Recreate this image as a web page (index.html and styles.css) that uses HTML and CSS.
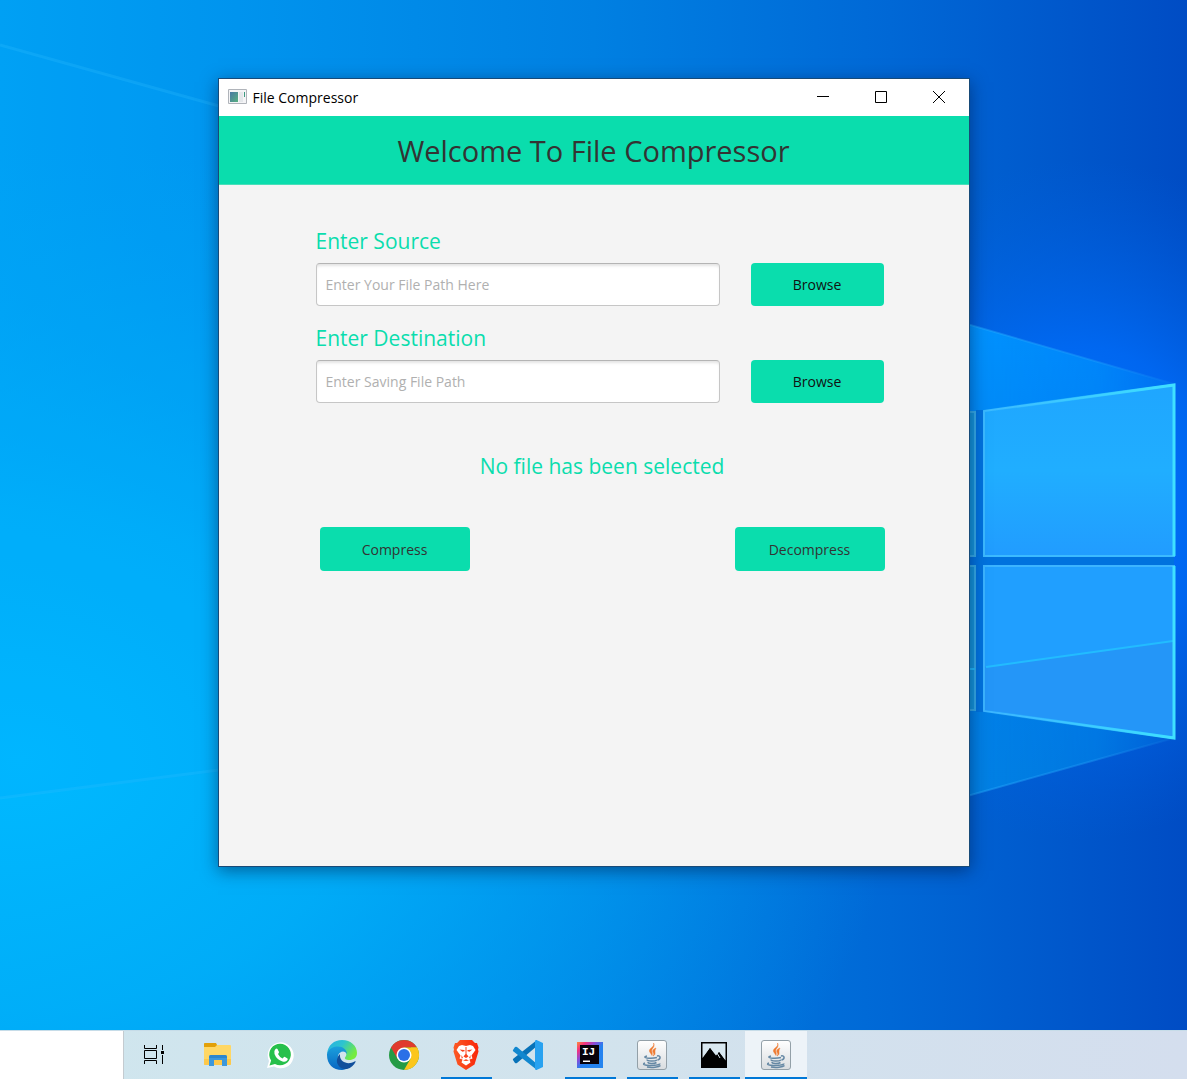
FILE: index.html
```html
<!DOCTYPE html>
<html lang="en">
<head>
<meta charset="utf-8">
<title>File Compressor</title>
<link rel="stylesheet" href="styles.css">
</head>
<body>
<div class="screen">
  <main class="desktop">
    <svg class="wallpaper" viewBox="0 0 1187 1030" preserveAspectRatio="none" aria-hidden="true">
      <defs>
        <linearGradient id="sky" x1="0" y1="0" x2="1" y2="0">
          <stop offset="0" stop-color="#00a0f4"/>
          <stop offset=".2" stop-color="#0094ee"/>
          <stop offset=".5" stop-color="#0080e2"/>
          <stop offset=".75" stop-color="#0068d6"/>
          <stop offset="1" stop-color="#004cc4"/>
        </linearGradient>
        <radialGradient id="cyan" gradientUnits="userSpaceOnUse" cx="0" cy="0" r="1" gradientTransform="translate(20 760) scale(880 620)">
          <stop offset="0" stop-color="#00b9ff"/>
          <stop offset=".4" stop-color="#00b2fa" stop-opacity=".8"/>
          <stop offset="1" stop-color="#00a4f4" stop-opacity="0"/>
        </radialGradient>
        <radialGradient id="glow" gradientUnits="userSpaceOnUse" cx="0" cy="0" r="1" gradientTransform="translate(1080 500) scale(300 340)">
          <stop offset="0" stop-color="#0078ff"/>
          <stop offset=".45" stop-color="#006cfa" stop-opacity=".8"/>
          <stop offset="1" stop-color="#0060e0" stop-opacity="0"/>
        </radialGradient>
        <linearGradient id="beam" x1="0" y1="0" x2="0" y2="1">
          <stop offset="0" stop-color="#0094ff"/>
          <stop offset=".5" stop-color="#0080ec"/>
          <stop offset="1" stop-color="#0082e4"/>
        </linearGradient>
        <linearGradient id="beamfade" x1="0" y1="0" x2="1" y2="0">
          <stop offset="0" stop-color="#fff"/>
          <stop offset=".6" stop-color="#bbb"/>
          <stop offset="1" stop-color="#222"/>
        </linearGradient>
        <mask id="fade"><rect x="960" y="300" width="227" height="500" fill="url(#beamfade)"/></mask>
        <linearGradient id="pane" x1="0" y1="0" x2="0" y2="1">
          <stop offset="0" stop-color="#1fa6ff"/>
          <stop offset=".5" stop-color="#20aeff"/>
          <stop offset="1" stop-color="#219cff"/>
        </linearGradient>
        <linearGradient id="edge" gradientUnits="userSpaceOnUse" x1="984" y1="0" x2="1174" y2="0">
          <stop offset="0" stop-color="#3fdcff" stop-opacity="0"/>
          <stop offset="1" stop-color="#3fe0ff"/>
        </linearGradient>
      </defs>
      <rect width="1187" height="1030" fill="url(#sky)"/>
      <rect width="1187" height="1030" fill="url(#cyan)"/>
      <rect width="1187" height="1030" fill="url(#glow)"/>
      <path d="M0 45 219 106V772L0 798Z" fill="#00a8ff" fill-opacity=".15"/>
      <path d="M0 45 219 106M0 798 219 770" stroke="#30c0ff" stroke-opacity=".25" stroke-width="3" fill="none"/>
      <g mask="url(#fade)">
        <path d="M960 322 1174 384V738L960 798Z" fill="url(#beam)"/>
        <path d="M960 322 1174 384M960 798 1174 738" stroke="#28b0ff" stroke-opacity=".45" stroke-width="2"/>
      </g>
      <path d="M960 557H1174V565H960ZM976 410H984V712H976Z" fill="#0072de"/>
      <path d="M960 412H975V556H960ZM960 566H975V710H960Z" fill="#1496dc" stroke="#35abe8" stroke-width="2"/>
      <path d="M984 411 1174 385V556H984Z" fill="url(#pane)" stroke="#3cbaff" stroke-width="2"/>
      <path d="M984 566H1174V738L984 711Z" fill="#209fff" stroke="#3cb4ff" stroke-width="2"/>
      <path d="M985 667 1173 641V736L985 710Z" fill="#2496f8"/>
      <path d="M960 669H975M986 667 1173 641" stroke="#22bcff" stroke-width="2"/>
      <path d="M984 411 1174 385V556M1174 566V738L984 711" stroke="url(#edge)" stroke-width="3" fill="none"/>
    </svg>

    <section class="window" aria-label="File Compressor">
      <header class="titlebar">
        <svg class="app-icon" viewBox="0 0 19 16" aria-hidden="true">
          <defs><linearGradient id="ai" x1="0" y1="0" x2="1" y2="1"><stop offset="0" stop-color="#4878a4"/><stop offset="1" stop-color="#58b080"/></linearGradient></defs>
          <path d="M.5.5h18v14H.5z" fill="#f4f4f6" stroke="#b0b4ba"/>
          <path d="M2 3h8v10H2z" fill="url(#ai)"/>
          <path d="M11 3h4v10h-4z" fill="#e4e7ea"/><path d="M16 3h1v5h-1z" fill="#3d9a80"/>
        </svg>
        <span class="window-name">File Compressor</span>
        <div class="window-controls">
          <button type="button" class="control" aria-label="Minimize"><svg viewBox="0 0 12 12"><path d="M0 5.500h12"/></svg></button>
          <button type="button" class="control" aria-label="Maximize"><svg viewBox="0 0 12 12"><path d="M.5.5h11v11H.5z"/></svg></button>
          <button type="button" class="control" aria-label="Close"><svg viewBox="0 0 12 12"><path d="m0 0 12 12M12 0 0 12"/></svg></button>
        </div>
      </header>
      <h1 class="banner">Welcome To File Compressor</h1>
      <form class="form">
        <div class="field">
          <label class="label" for="source">Enter Source</label>
          <input class="input" id="source" type="text" placeholder="Enter Your File Path Here">
          <button class="button button-browse" type="button">Browse</button>
        </div>
        <div class="field">
          <label class="label" for="destination">Enter Destination</label>
          <input class="input" id="destination" type="text" placeholder="Enter Saving File Path">
          <button class="button button-browse" type="button">Browse</button>
        </div>
        <div class="result">
          <p class="status">No file has been selected</p>
          <div class="actions">
            <button class="button button-action" type="button">Compress</button>
            <button class="button button-action" type="button">Decompress</button>
          </div>
        </div>
      </form>
    </section>
  </main>

  <nav class="taskbar" aria-label="Taskbar">
    <div class="search"></div>
    <button type="button" class="task" aria-label="Task View"><svg viewBox="0 0 32 32"><path d="M4.500 6v3.500h12V6M4.500 25v-3.500h12V25M4.500 11.500h12v8h-12zM22.500 6v5M22.500 16v9" fill="none" stroke="#000"/><path d="M21 12h3v3h-3z"/></svg></button>
    <button type="button" class="task" aria-label="File Explorer"><svg viewBox="0 0 32 32"><path d="M2 5q0-1 1-1h10l2 2h13q1 0 1 1v18q0 1-1 1H3q-1 0-1-1z" fill="#ffd764"/><path d="M2 5q0-1 1-1h11l1 2-2 2H2z" fill="#e2a008"/><path d="M2 20h27v5q0 1-1 1H3q-1 0-1-1z" fill="#fdc84a"/><path d="M7 27V18q0-2 2-2h14q2 0 2 2v9h-5v-6h-8v6z" fill="#3c98dc"/><path d="M7 19v-1q0-2 2-2h14q2 0 2 2v1z" fill="#2d86cd"/></svg></button>
    <button type="button" class="task" aria-label="WhatsApp"><svg viewBox="0 0 32 32"><path d="M3 29l2-7A13 13 0 1 1 10 27.500z" fill="#fff"/><path d="M5.500 26.500l1.600-5A10.800 10.800 0 1 1 11 25z" fill="#27c04b"/><path d="M11.500 10q1-1 2 0l1.500 3q0 1-1 2 1.500 3 4.500 4.500l1.500-1.500q.5-.5 1 0l2.500 1.500q.5.500 0 1.500-1.500 2.500-5 1.500-6-2-8-7.500-1-3 1-5z" fill="#fff"/></svg></button>
    <button type="button" class="task" aria-label="Microsoft Edge"><svg viewBox="0 0 32 32">
      <defs><linearGradient id="e1" x1="0" y1="0" x2="1" y2=".5"><stop offset="0" stop-color="#28aee6"/><stop offset=".5" stop-color="#2dc4cf"/><stop offset="1" stop-color="#75ec3f"/></linearGradient><linearGradient id="e2" x1="0" y1="0" x2="0" y2="1"><stop offset="0" stop-color="#1ba0dd"/><stop offset="1" stop-color="#0866c2"/></linearGradient></defs>
      <path d="M1 15C2 6 8 1 16 1c9 0 15 6 15 13 0 5-4 7-7.500 7-4 0-5-1.500-4.500-2.500 3-3 1-7.500-5-7.500C7 11 2 14 1 15z" fill="url(#e1)"/>
      <path d="M1 15c2-6 7-7.500 11-7.500 5 0 9 3.500 9 7.500-2-4-8-3-9 2-1.500 7 4 12 11 11-2 2-5 3-7 3C7 31 1 25 1 16z" fill="url(#e2)"/>
      <path d="M14 15c-7 7-1 16 7 15 4-1 7-4 8.500-7 .5-1 0-1-1-.5-7 4-14 0-14.500-5z" fill="#114f9c"/></svg></button>
    <button type="button" class="task" aria-label="Google Chrome"><svg viewBox="0 0 32 32"><circle cx="16" cy="16" r="15" fill="#259b45"/><path d="M3 8.500A15 15 0 0 1 29 8.500H16L9.500 19.800z" fill="#e03b2e"/><path d="M29 8.500A15 15 0 0 1 16 31l6.500-11.300L23 8.500z" fill="#fcc61c"/><path d="M16 8.500h13q1 2 1.500 4H20z" fill="#fcc61c"/><circle cx="16" cy="16" r="7.500" fill="#fff"/><circle cx="16" cy="16" r="6" fill="#2b70e7"/></svg></button>
    <button type="button" class="task task-running" aria-label="Brave"><svg viewBox="0 0 32 32">
      <defs><linearGradient id="br"><stop offset="0" stop-color="#fb5a25"/><stop offset="1" stop-color="#f92609"/></linearGradient></defs>
      <path d="M10 1h12l3 3h2l1.500 4.500-.5 2 .5 2-4 13L16 31l-8.500-5.500-4-13 .5-2-.5-2L5 4h2z" fill="url(#br)"/>
      <path d="M12 6l4 1 4-1 3 1 2.500 4-4 5.500 1 3-3 1 1 3-4.500 3-4.500-3 1-3-3-1 1-3-4-5.500L9 7z" fill="#fff"/>
      <path d="M15.500 8h1v7l2 2.500-2.500 1.500-2.500-1.500 2-2.500zM9.500 10.500l4.500.5 1 1-2.500.8zM22.500 10.500l-4.500.5-1 1 2.500.8zM11.500 16l1.500 3-1.500.5zM20.500 16l-1.500 3 1.500.5zM13 21.500l3-1.200 3 1.200-3 .5z" fill="#fb421b"/></svg></button>
    <button type="button" class="task" aria-label="Visual Studio Code"><svg viewBox="0 0 32 32"><path d="M1 21l2 3q1 .5 2 0L25 7V1L1.500 19.500Q.5 20 1 21z" fill="#0872b8"/><path d="M1 11l2-3q1-.5 2 0l20 17v6L1.500 12.500Q.5 12 1 11z" fill="#1187cf"/><path d="M23 1.500 24.500 1 31 4v24l-6.500 3-1.500-.5z" fill="#29a2f0"/></svg></button>
    <button type="button" class="task task-running" aria-label="IntelliJ IDEA"><svg viewBox="0 0 32 32">
      <defs><linearGradient id="ij" x1="0" y1="0" x2="1" y2="1"><stop offset="0" stop-color="#fc8a3a"/><stop offset=".18" stop-color="#f5317c"/><stop offset=".36" stop-color="#8b4bd8"/><stop offset=".55" stop-color="#2481f0"/><stop offset="1" stop-color="#2585ee"/></linearGradient></defs>
      <path d="M3 3h26v26H3z" fill="url(#ij)"/><path d="M6 6h19v19H6z" fill="#08020a"/><text class="ij-mark" x="8" y="16">IJ</text><path d="M9 21.500h7v1.500H9z" fill="#fff"/></svg></button>
    <button type="button" class="task task-running" aria-label="Java"><svg viewBox="0 0 32 32">
      <defs><linearGradient id="jv" x1="0" y1="0" x2="0" y2="1"><stop offset="0" stop-color="#fff"/><stop offset="1" stop-color="#d9dde0"/></linearGradient>
      <g id="java"><rect x="1.500" y="1.500" width="29" height="29" rx="2.500" fill="url(#jv)" stroke="#93a0a8"/><path d="M17.500 4c2 4-5 5-4 8.500.5 1.500 2 2.500 2.500 4 1-3-1-4 0-6s3-3 1.500-6.500zM20 9c-3 1-4 3-2.500 5 1 1.500-.5 3-.5 3 4-2 .5-4 3-8z" fill="#ee7b32" stroke="#ee7b32" stroke-width=".5"/><path d="M11 17c-3 .5-3 1.500 0 2 4 .5 8 0 10-.5M21 17c4-1 4 3 .5 4M11 20.500c0 2 8 2 10 .5M12 23c0 2 6 2 8.500.5M9 24c-3 1-1 2.500 5 2.500s10-1 10-2M11 28c5 1 12 0 13.500-1.500" fill="none" stroke="#6588a4" stroke-width="1.500"/></g></defs>
      <use href="#java"/></svg></button>
    <button type="button" class="task task-running" aria-label="Photos"><svg viewBox="0 0 32 32"><path d="M3 3h26v26H3z"/><path d="M4.500 4.500h23v17L21 13l-3 3.500L12 9l-7.500 10z" fill="#d9e8f0"/><path d="M4 21 12 9l7 11 2-7 7 10v5H4z"/><path d="M19 14l3 5" stroke="#d9e8f0"/></svg></button>
    <button type="button" class="task task-active" aria-label="File Compressor"><svg viewBox="0 0 32 32"><use href="#java"/></svg></button>
  </nav>
</div>
</body>
</html>
```
FILE: styles.css
```css
* {
  box-sizing: border-box;
}

body {
  margin: 0;
  font-family: "Open Sans", "Noto Sans", sans-serif;
  font-size: 14px;
}

button,
input {
  font: inherit;
}

.screen {
  display: flex;
  flex-direction: column;
  min-height: 100vh;
}

.desktop {
  position: relative;
  flex: 1;
  display: flex;
  justify-content: center;
  align-items: flex-start;
  padding: 78px 24px;
  overflow: hidden;
}

.wallpaper {
  position: absolute;
  inset: 0;
  width: 100%;
  height: 100%;
}

.window {
  position: relative;
  width: 100%;
  max-width: 752px;
  min-height: 789px;
  background: #f4f4f4;
  border: 1px solid #174a78;
  box-shadow: 0 4px 16px rgba(0, 20, 60, 0.5);
}

.titlebar {
  display: flex;
  align-items: center;
  height: 37px;
  padding: 0 1px 1px 9px;
  background: #fff;
  color: #000;
}

.app-icon {
  width: 19px;
  height: 16px;
  margin-right: 6px;
}

.window-controls {
  display: flex;
  margin-left: auto;
}

.control {
  display: grid;
  place-items: center;
  width: 58px;
  height: 36px;
  padding: 0;
  border: 0;
  background: none;
}

.control svg {
  width: 12px;
  height: 12px;
  fill: none;
  stroke: #000;
}

.banner {
  margin: 0;
  padding: 14px 0 13px;
  border-bottom: 1px solid #48dfb9;
  background: #0addad;
  color: #333;
  font-size: 29px;
  font-weight: 400;
  line-height: 41px;
  text-align: center;
}

.form {
  display: flex;
  flex-direction: column;
  gap: 17px;
  padding: 41px 84px 40px 97px;
}

.field {
  display: grid;
  grid-template-columns: 1fr 133px;
  column-gap: 31px;
  row-gap: 7px;
  align-items: center;
  padding-right: 1px;
}

.label,
.status {
  color: #0addad;
  font-size: 21px;
  line-height: 30px;
}

.label {
  grid-column: 1 / -1;
}

.input {
  width: 100%;
  min-width: 0;
  height: 43px;
  padding: 0 9px;
  border: 1px solid #c6c6c6;
  border-top-color: #b4b4b4;
  border-radius: 4px;
  background: #fff;
  box-shadow: inset 0 3px 3px -1px #e4e4e4;
  color: #333;
}

.input::placeholder {
  color: #b0b0b0;
  opacity: 1;
}

.button {
  padding: 0;
  border: 0;
  border-radius: 4px;
  background: #0addad;
}

.button-browse {
  height: 43px;
  color: #111;
}

.button-action {
  width: 150px;
  height: 44px;
  color: #333;
}

.result {
  padding: 31px 0 0 4px;
}

.status {
  margin: 0 0 46px;
  text-align: center;
}

.actions {
  display: flex;
  justify-content: space-between;
}

.taskbar {
  display: flex;
  height: 49px;
  background: linear-gradient(90deg, #cfe6ee, #d2e3ed 50%, #d4deee);
  border-top: 1px solid #c6dce8;
}

.search {
  flex: 0 1 124px;
  margin-right: 1px;
  border-right: 1px solid #c4cbd0;
  background: #fff;
}

.task {
  display: grid;
  place-items: center;
  flex: 0 1 62px;
  padding: 0;
  border: 0;
  background: none;
}

.task svg {
  width: 32px;
  height: 32px;
}

.task-running {
  background: linear-gradient(#0078d7, #0078d7) center bottom / 51px 2px no-repeat;
}

.task-active {
  background: linear-gradient(#0078d7, #0078d7) center bottom / 100% 2px no-repeat #edf3f8;
}

.ij-mark {
  fill: #fff;
  font: bold 11px "Liberation Mono", monospace;
}
```
